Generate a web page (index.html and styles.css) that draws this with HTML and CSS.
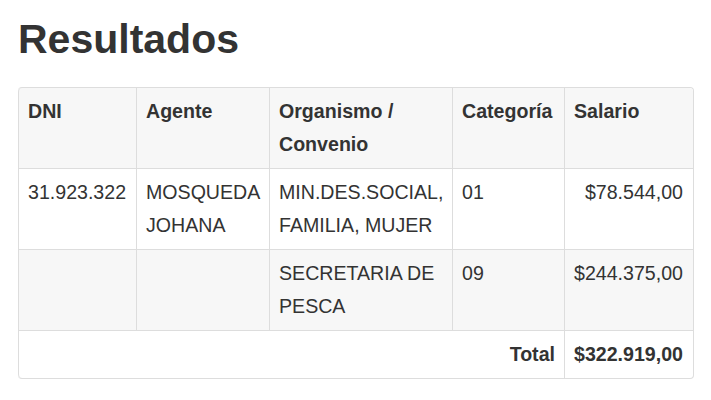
FILE: index.html
```html
<!DOCTYPE html>
<html lang="es">
<head>
  <meta charset="UTF-8">
  <title>Resultados</title>
  <link rel="stylesheet" href="styles.css">
</head>
<body>

  <h1>Resultados</h1>

  <table class="results">
    <colgroup>
      <col class="c-dni">
      <col class="c-agente">
      <col class="c-org">
      <col class="c-cat">
      <col class="c-sal">
    </colgroup>
    <thead>
      <tr>
        <th>DNI</th>
        <th>Agente</th>
        <th>Organismo / Convenio</th>
        <th>Categoría</th>
        <th>Salario</th>
      </tr>
    </thead>
    <tbody>
      <tr>
        <td>31.923.322</td>
        <td>MOSQUEDA JOHANA</td>
        <td>MIN.DES.SOCIAL, FAMILIA, MUJER</td>
        <td>01</td>
        <td class="money">$78.544,00</td>
      </tr>
      <tr class="striped">
        <td></td>
        <td></td>
        <td>SECRETARIA DE PESCA</td>
        <td>09</td>
        <td class="money">$244.375,00</td>
      </tr>
      <tr>
        <td colspan="4" class="total-label">Total</td>
        <td class="money total">$322.919,00</td>
      </tr>
    </tbody>
  </table>

</body>
</html>
```

FILE: styles.css
```css
body {
  margin: 0;
  padding: 0 18px;
  font-family: "Liberation Sans", Arial, sans-serif;
  color: #333;
}
h1 {
  font-size: 41px;
  font-weight: bold;
  line-height: 46px;
  margin: 16px 0 25px;
}
.results {
  width: 675px;
  table-layout: fixed;
  border-collapse: separate;
  border-spacing: 0;
  border: 1px solid #ddd;
  border-left: 0;
  border-radius: 4px;
  font-size: 19.6px;
  line-height: 33px;
}
.c-dni { width: 118px; }
.c-agente { width: 133px; }
.c-org { width: 183px; }
.c-cat { width: 112px; }
.c-sal { width: 129px; }
th, td {
  padding: 7px 9px 7px 9px;
  border-left: 1px solid #ddd;
  border-top: 1px solid #ddd;
  text-align: left;
  vertical-align: top;
}
thead th {
  border-top: 0;
  background: #f7f7f7;
  font-weight: bold;
}
thead th:first-child {
  border-top-left-radius: 4px;
}
thead th:last-child {
  border-top-right-radius: 4px;
}
tbody tr:last-child td:first-child {
  border-bottom-left-radius: 4px;
}
tbody tr:last-child td:last-child {
  border-bottom-right-radius: 4px;
}
.striped td {
  background: #f7f7f7;
}
.money {
  text-align: right;
  white-space: nowrap;
  padding-right: 10px;
}
.total-label {
  text-align: right;
  font-weight: bold;
}
.total {
  font-weight: bold;
}
```
